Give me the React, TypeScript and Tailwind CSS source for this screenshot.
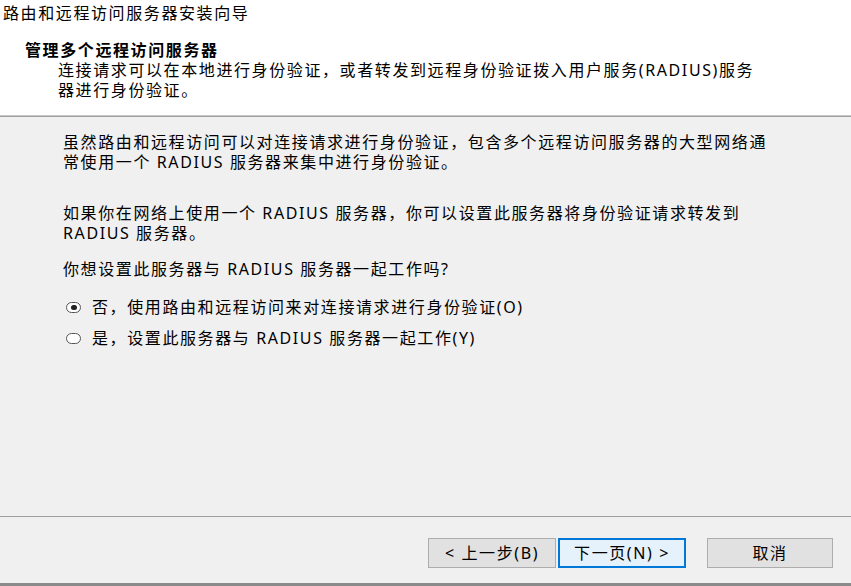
import { useState } from 'react';

export default function App() {
  const [choice, setChoice] = useState<'no' | 'yes'>('no');

  return (
    <div className="w-[851px] h-[586px] flex flex-col bg-[#f0f0f0] text-black text-[16px] leading-[20px] tracking-[1.6px] font-['Noto_Sans','Noto_Sans_CJK_SC',sans-serif] overflow-hidden">
      {/* header */}
      <div className="h-[115px] bg-white flex flex-col pt-[3px]">
        <div className="pl-[3px] whitespace-nowrap">路由和远程访问服务器安装向导</div>
        <div className="pl-[25px] mt-[17px] font-bold whitespace-nowrap">管理多个远程访问服务器</div>
        <div className="pl-[58px] whitespace-nowrap">
          <div>连接请求可以在本地进行身份验证，或者转发到远程身份验证拨入用户服务(RADIUS)服务</div>
          <div>器进行身份验证。</div>
        </div>
      </div>
      <div className="h-px bg-[#c8c8c8]" />
      <div className="h-px bg-[#a0a0a0]" />

      {/* body */}
      <div className="flex-1 flex flex-col pl-[63px] pt-[15px] whitespace-nowrap">
        <div>
          <div>虽然路由和远程访问可以对连接请求进行身份验证，包含多个远程访问服务器的大型网络通</div>
          <div>常使用一个 RADIUS 服务器来集中进行身份验证。</div>
        </div>
        <div className="mt-[31px]">
          <div>如果你在网络上使用一个 RADIUS 服务器，你可以设置此服务器将身份验证请求转发到</div>
          <div>RADIUS 服务器。</div>
        </div>
        <div className="mt-[16px]">你想设置此服务器与 RADIUS 服务器一起工作吗?</div>

        <div className="mt-[18px] flex flex-col gap-[11px]">
          <Radio
            checked={choice === 'no'}
            onClick={() => setChoice('no')}
            label="否，使用路由和远程访问来对连接请求进行身份验证(O)"
          />
          <Radio
            checked={choice === 'yes'}
            onClick={() => setChoice('yes')}
            label="是，设置此服务器与 RADIUS 服务器一起工作(Y)"
          />
        </div>
      </div>

      {/* footer */}
      <div className="h-px bg-[#a0a0a0]" />
      <div className="h-[69px] flex flex-col border-b-[3px] border-[#8a8a8a]">
        <div className="flex items-center pt-[21px] pl-[428px]">
          <button className="w-[128px] h-[30px] bg-[#e1e1e1] border border-[#adadad] flex items-center justify-center">
            &lt; 上一步(B)
          </button>
          <button className="ml-[2px] w-[128px] h-[30px] bg-[#e5f1fb] border-2 border-[#0078d7] flex items-center justify-center">
            下一页(N) &gt;
          </button>
          <button className="ml-[21px] w-[126px] h-[30px] bg-[#e1e1e1] border border-[#adadad] flex items-center justify-center">
            取消
          </button>
        </div>
      </div>
    </div>
  );
}

function Radio({ checked, onClick, label }: { checked: boolean; onClick: () => void; label: string }) {
  return (
    <div className="flex items-center h-[20px] cursor-default" onClick={onClick}>
      <span className="ml-[3px] w-[15px] h-[11px] rounded-full border border-[#555] bg-white flex items-center justify-center">
        {checked && <span className="w-[6px] h-[5px] rounded-full bg-[#222]" />}
      </span>
      <span className="ml-[11px]">{label}</span>
    </div>
  );
}
